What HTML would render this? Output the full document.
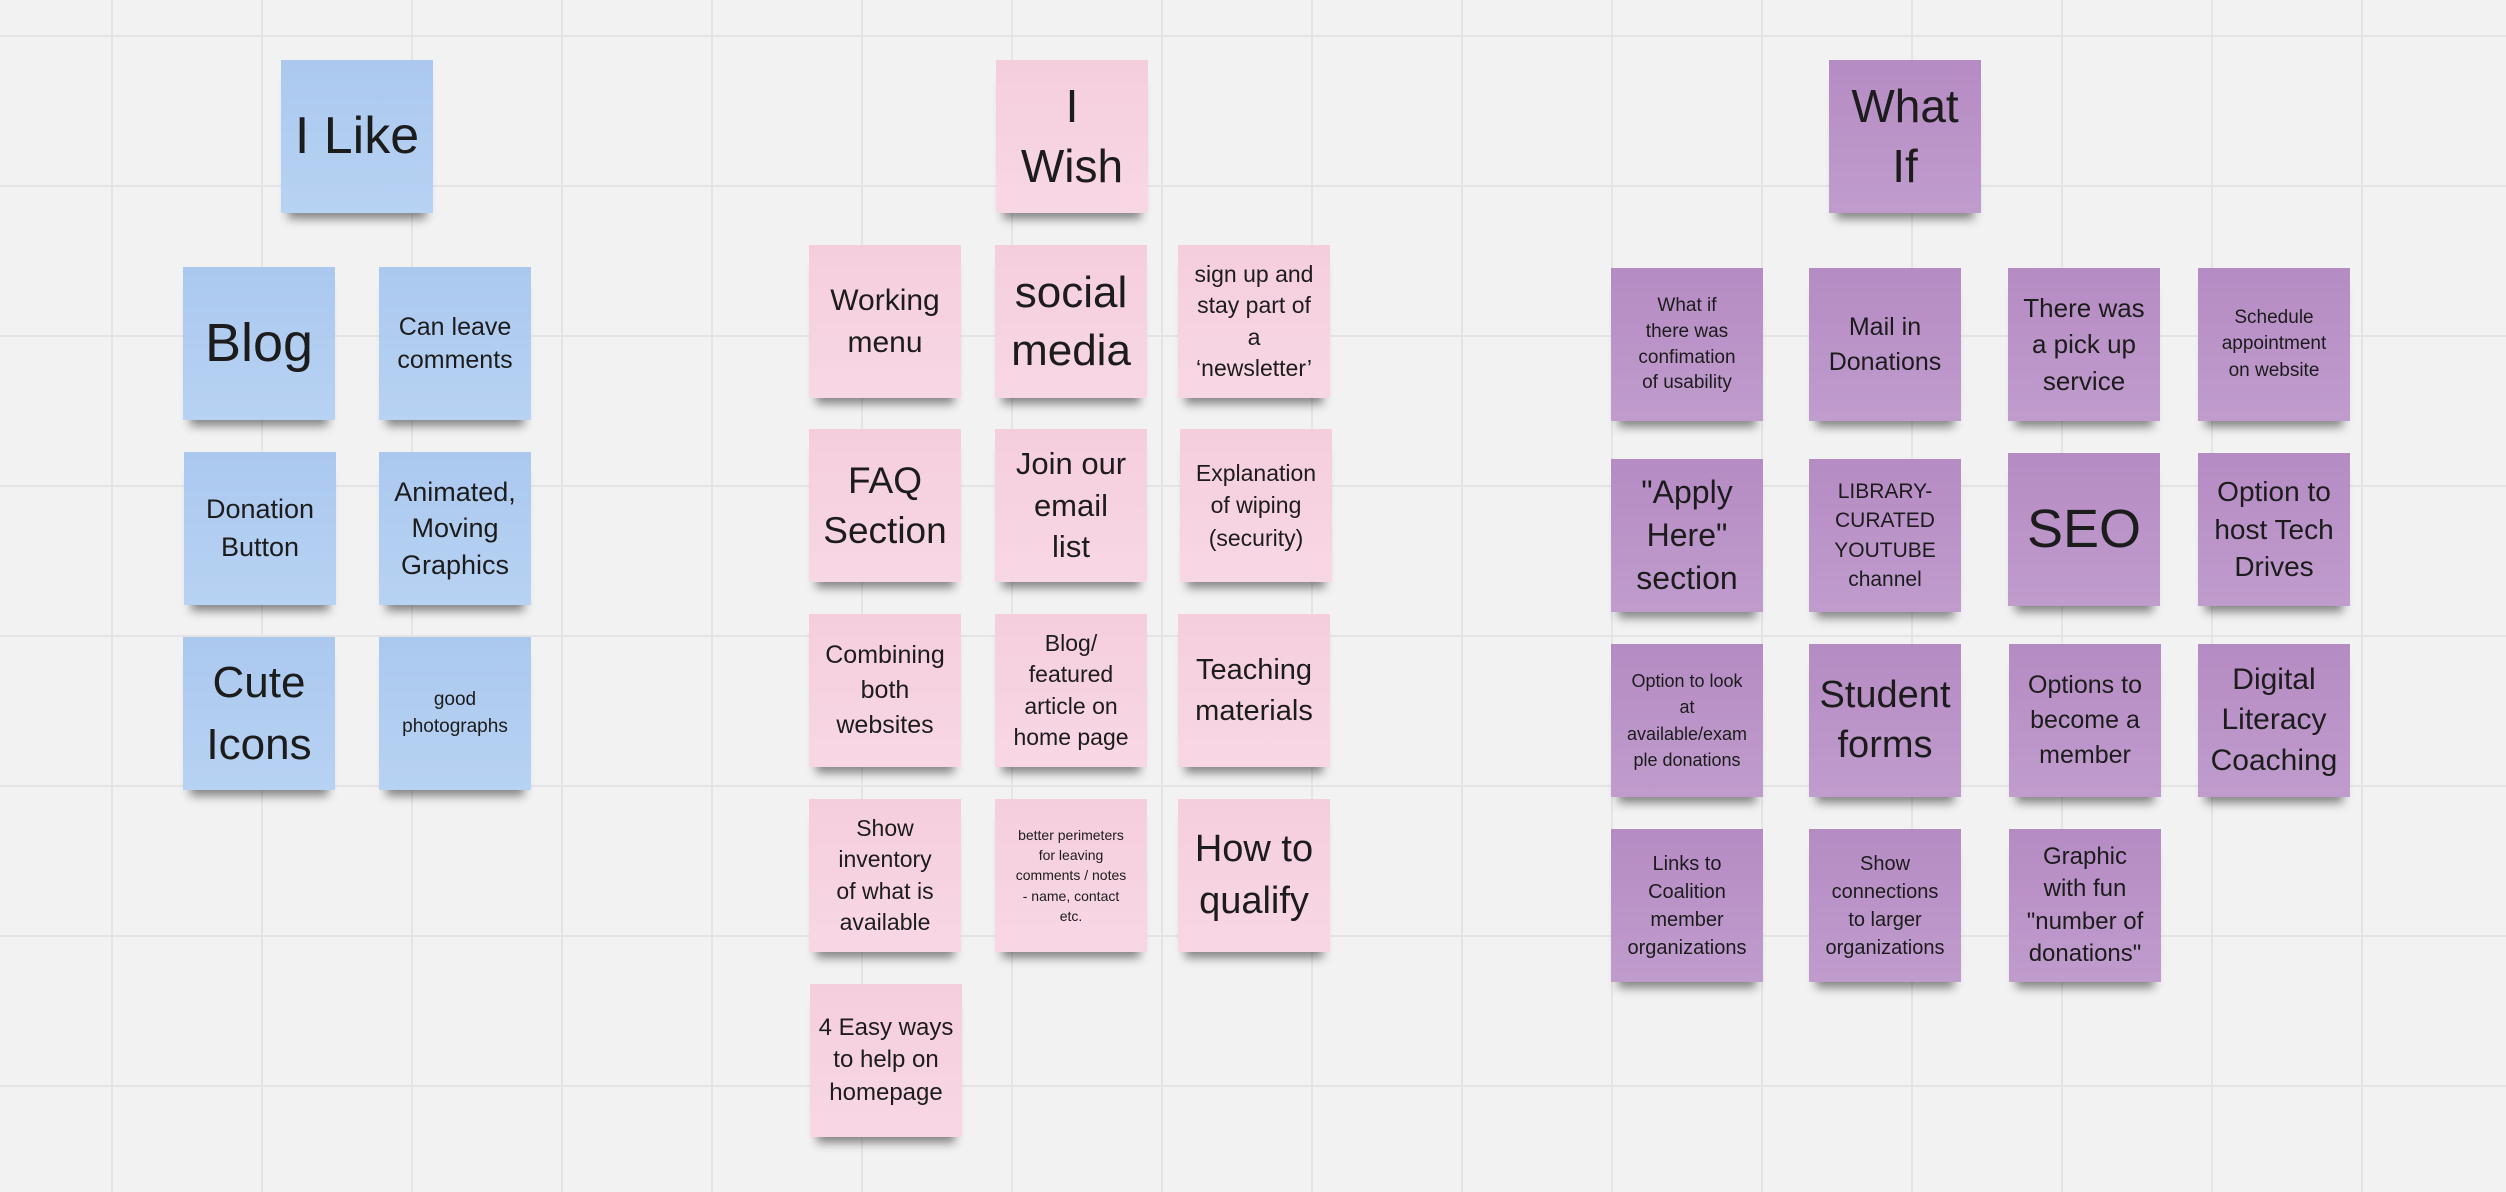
<!DOCTYPE html>
<html><head><meta charset="utf-8">
<style>
html,body{margin:0;padding:0}
body{width:2506px;height:1192px;overflow:hidden;position:relative;background-color:#f2f2f2;
background-image:linear-gradient(to right,#e4e4e4 2px,transparent 2px),linear-gradient(to bottom,#e4e4e4 2px,transparent 2px);
background-size:150px 150px;background-position:111px 35px;font-family:"Liberation Sans",sans-serif}
.n{position:absolute;width:152px;height:153px;display:flex;align-items:center;justify-content:center;text-align:center;color:#1c1c1c;line-height:1.3;box-sizing:border-box;padding:2px;white-space:nowrap;box-shadow:0 13px 9px -7px rgba(0,0,0,0.45)}
.b{background:linear-gradient(#abc8ef,#b7d2f2)}
.p{background:linear-gradient(#f5cedd,#f8d7e4)}
.u{background:linear-gradient(#b58bc3,#c09ccd)}
</style></head><body>
<!-- Blue -->
<div class="n b" style="left:281px;top:60px;font-size:52px">I Like</div>
<div class="n b" style="left:183px;top:267px;font-size:54px">Blog</div>
<div class="n b" style="left:379px;top:267px;font-size:25px">Can leave<br>comments</div>
<div class="n b" style="left:184px;top:452px;font-size:27px;line-height:1.4">Donation<br>Button</div>
<div class="n b" style="left:379px;top:452px;font-size:27px;line-height:1.35">Animated,<br>Moving<br>Graphics</div>
<div class="n b" style="left:183px;top:637px;font-size:44px;line-height:1.4">Cute<br>Icons</div>
<div class="n b" style="left:379px;top:637px;font-size:19px;line-height:1.4">good<br>photographs</div>
<!-- Pink -->
<div class="n p" style="left:996px;top:60px;font-size:46px;line-height:1.3">I<br>Wish</div>
<div class="n p" style="left:809px;top:245px;font-size:30px;line-height:1.4">Working<br>menu</div>
<div class="n p" style="left:995px;top:245px;font-size:44px;line-height:1.3">social<br>media</div>
<div class="n p" style="left:1178px;top:245px;font-size:23px;line-height:1.35">sign up and<br>stay part of<br>a<br>‘newsletter’</div>
<div class="n p" style="left:809px;top:429px;font-size:37px;line-height:1.35">FAQ<br>Section</div>
<div class="n p" style="left:995px;top:429px;font-size:31px;line-height:1.35">Join our<br>email<br>list</div>
<div class="n p" style="left:1180px;top:429px;font-size:23px;line-height:1.4">Explanation<br>of wiping<br>(security)</div>
<div class="n p" style="left:809px;top:614px;font-size:25px;line-height:1.4">Combining<br>both<br>websites</div>
<div class="n p" style="left:995px;top:614px;font-size:23px;line-height:1.35">Blog/<br>featured<br>article on<br>home page</div>
<div class="n p" style="left:1178px;top:614px;font-size:29px;line-height:1.4">Teaching<br>materials</div>
<div class="n p" style="left:809px;top:799px;font-size:23px;line-height:1.35">Show<br>inventory<br>of what is<br>available</div>
<div class="n p" style="left:995px;top:799px;font-size:14px;line-height:1.45">better perimeters<br>for leaving<br>comments / notes<br>- name, contact<br>etc.</div>
<div class="n p" style="left:1178px;top:799px;font-size:38px;line-height:1.35">How to<br>qualify</div>
<div class="n p" style="left:810px;top:984px;font-size:24px;line-height:1.35">4 Easy ways<br>to help on<br>homepage</div>
<!-- Purple -->
<div class="n u" style="left:1829px;top:60px;font-size:46px;line-height:1.3">What<br>If</div>
<div class="n u" style="left:1611px;top:268px;font-size:19px;line-height:1.35">What if<br>there was<br>confimation<br>of usability</div>
<div class="n u" style="left:1809px;top:268px;font-size:25px;line-height:1.4">Mail in<br>Donations</div>
<div class="n u" style="left:2008px;top:268px;font-size:26px;line-height:1.4">There was<br>a pick up<br>service</div>
<div class="n u" style="left:2198px;top:268px;font-size:19px;line-height:1.4">Schedule<br>appointment<br>on website</div>
<div class="n u" style="left:1611px;top:459px;font-size:32px;line-height:1.35">"Apply<br>Here"<br>section</div>
<div class="n u" style="left:1809px;top:459px;font-size:21px;line-height:1.4">LIBRARY-<br>CURATED<br>YOUTUBE<br>channel</div>
<div class="n u" style="left:2008px;top:453px;font-size:54px">SEO</div>
<div class="n u" style="left:2198px;top:453px;font-size:28px;line-height:1.35">Option to<br>host Tech<br>Drives</div>
<div class="n u" style="left:1611px;top:644px;font-size:18px;line-height:1.45">Option to look<br>at<br>available/exam<br>ple donations</div>
<div class="n u" style="left:1809px;top:644px;font-size:38px;line-height:1.3">Student<br>forms</div>
<div class="n u" style="left:2009px;top:644px;font-size:25px;line-height:1.4">Options to<br>become a<br>member</div>
<div class="n u" style="left:2198px;top:644px;font-size:30px;line-height:1.35">Digital<br>Literacy<br>Coaching</div>
<div class="n u" style="left:1611px;top:829px;font-size:20px;line-height:1.4">Links to<br>Coalition<br>member<br>organizations</div>
<div class="n u" style="left:1809px;top:829px;font-size:20px;line-height:1.4">Show<br>connections<br>to larger<br>organizations</div>
<div class="n u" style="left:2009px;top:829px;font-size:24px;line-height:1.35">Graphic<br>with fun<br>"number of<br>donations"</div>
</body></html>
